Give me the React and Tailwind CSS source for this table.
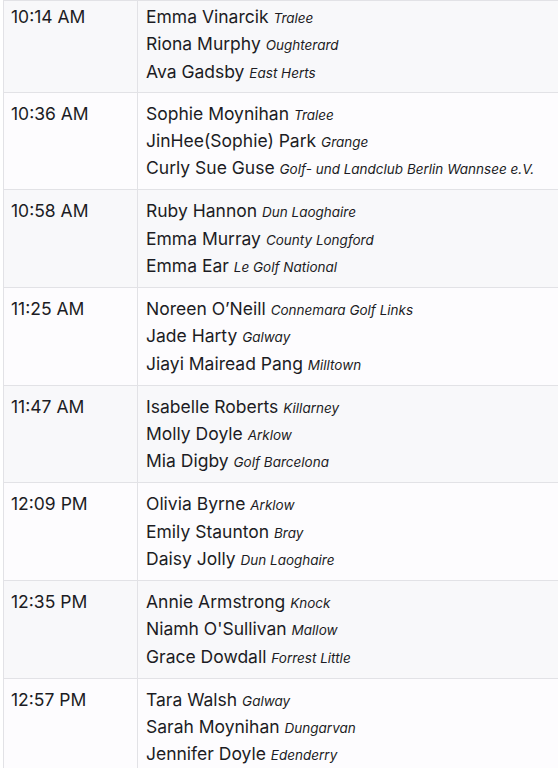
const teeTimes = [
  {
    time: '10:14 AM',
    players: [
      ['Emma Vinarcik', 'Tralee'],
      ['Riona Murphy', 'Oughterard'],
      ['Ava Gadsby', 'East Herts'],
    ],
  },
  {
    time: '10:36 AM',
    players: [
      ['Sophie Moynihan', 'Tralee'],
      ['JinHee(Sophie) Park', 'Grange'],
      ['Curly Sue Guse', 'Golf- und Landclub Berlin Wannsee e.V.'],
    ],
  },
  {
    time: '10:58 AM',
    players: [
      ['Ruby Hannon', 'Dun Laoghaire'],
      ['Emma Murray', 'County Longford'],
      ['Emma Ear', 'Le Golf National'],
    ],
  },
  {
    time: '11:25 AM',
    players: [
      ['Noreen O’Neill', 'Connemara Golf Links'],
      ['Jade Harty', 'Galway'],
      ['Jiayi Mairead Pang', 'Milltown'],
    ],
  },
  {
    time: '11:47 AM',
    players: [
      ['Isabelle Roberts', 'Killarney'],
      ['Molly Doyle', 'Arklow'],
      ['Mia Digby', 'Golf Barcelona'],
    ],
  },
  {
    time: '12:09 PM',
    players: [
      ['Olivia Byrne', 'Arklow'],
      ['Emily Staunton', 'Bray'],
      ['Daisy Jolly', 'Dun Laoghaire'],
    ],
  },
  {
    time: '12:35 PM',
    players: [
      ['Annie Armstrong', 'Knock'],
      ["Niamh O'Sullivan", 'Mallow'],
      ['Grace Dowdall', 'Forrest Little'],
    ],
  },
  {
    time: '12:57 PM',
    players: [
      ['Tara Walsh', 'Galway'],
      ['Sarah Moynihan', 'Dungarvan'],
      ['Jennifer Doyle', 'Edenderry'],
    ],
  },
];

export default function App() {
  return (
    <div className="h-[768px] w-[558px] overflow-hidden bg-white text-[#1c1c24]" style={{ fontFamily: 'Inter, "Noto Sans", sans-serif' }}>
      <div className="ml-[3px] border-t border-[#e2e2e6]">
        {teeTimes.map((row, i) => (
          <div
            key={row.time}
            className={`flex border-b border-l border-[#e2e2e6] ${i % 2 === 0 ? 'bg-[#f8f8fa]' : 'bg-[#fdfcfe]'}`}
          >
            <div className={`w-[134px] shrink-0 border-r border-[#e2e2e6] pl-[7px] text-[17.5px] leading-[27.4px] ${i === 0 ? 'pt-[2px]' : 'pt-[7px]'}`}>
              {row.time}
            </div>
            <div className={`flex-1 pl-[8px] ${i === 0 ? 'pt-[2px] pb-[6.5px]' : 'pt-[7px] pb-[7.5px]'}`}>
              {row.players.map(([name, club]) => (
                <div key={name} className="h-[27.4px] whitespace-nowrap text-[17.5px] leading-[27.4px]">
                  {name} <span className="text-[13.5px] italic leading-none">{club}</span>
                </div>
              ))}
            </div>
          </div>
        ))}
      </div>
    </div>
  );
}
